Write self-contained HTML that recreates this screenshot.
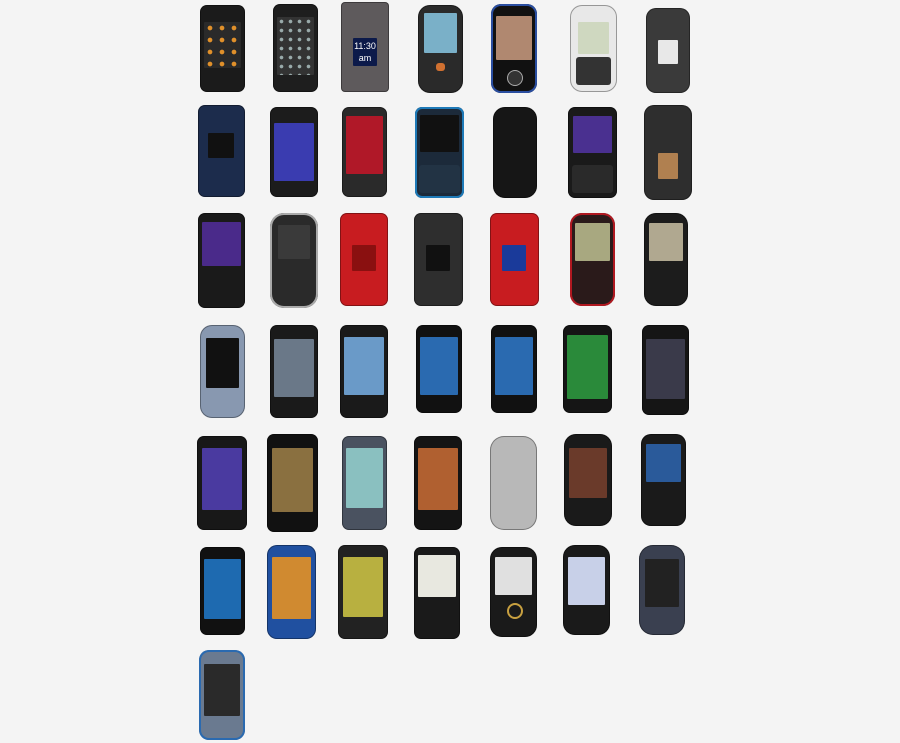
<!DOCTYPE html>
<html><head><style>
body{margin:0;width:900px;height:743px;background:#f4f4f4;position:relative;overflow:hidden;font-family:"Liberation Sans",sans-serif}
.p{position:absolute;border-radius:7px;box-shadow:inset 0 0 0 1px rgba(0,0,0,.35)}
.s{position:absolute;border-radius:1px}
.k{position:absolute;border-radius:3px}
</style></head><body>
<!-- Row 1 -->
<div class="p" style="left:200px;top:5px;width:45px;height:87px;background:#1b1b1b"><div class="s" style="left:4px;top:17px;width:37px;height:46px;background:#2a2a2a;background-image:radial-gradient(#e0902a 25%,transparent 30%);background-size:12px 12px"></div></div>
<div class="p" style="left:273px;top:4px;width:45px;height:88px;background:#1e1e1e"><div class="s" style="left:4px;top:13px;width:37px;height:58px;background:#333;background-image:radial-gradient(#9aa 25%,transparent 32%);background-size:9px 9px"></div></div>
<div class="p" style="left:341px;top:2px;width:48px;height:90px;background:#5e5a5c;border-radius:4px"><div class="s" style="left:12px;top:36px;width:24px;height:26px;background:#0c1a4a;color:#fff;font-size:9px;text-align:center;line-height:12px;padding-top:2px">11:30<br>am</div></div>
<div class="p" style="left:418px;top:5px;width:45px;height:88px;background:#2a2a2a;border-radius:12px"><div class="s" style="left:6px;top:8px;width:33px;height:40px;background:#7ab0c8"></div><div class="k" style="left:18px;top:58px;width:9px;height:8px;background:#d07030"></div></div>
<div class="p" style="left:491px;top:4px;width:46px;height:89px;background:#111;box-shadow:inset 0 0 0 2px #2a4ea0;border-radius:10px"><div class="s" style="left:5px;top:12px;width:36px;height:44px;background:#b08870"></div><div class="k" style="left:16px;top:66px;width:14px;height:14px;border-radius:50%;background:#333;border:1px solid #aaa"></div></div>
<div class="p" style="left:570px;top:5px;width:47px;height:87px;background:#e8e8e8;border-radius:12px"><div class="s" style="left:8px;top:17px;width:31px;height:32px;background:#cfd8c0"></div><div class="k" style="left:6px;top:52px;width:35px;height:28px;background:#333"></div></div>
<div class="p" style="left:646px;top:8px;width:44px;height:85px;background:#3a3a3a;border-radius:10px"><div class="s" style="left:12px;top:32px;width:20px;height:24px;background:#e8e8e8"></div></div>
<!-- Row 2 -->
<div class="p" style="left:198px;top:105px;width:47px;height:92px;background:#1c2c4c"><div class="s" style="left:10px;top:28px;width:26px;height:25px;background:#111"></div></div>
<div class="p" style="left:270px;top:107px;width:48px;height:90px;background:#1c1c1c"><div class="s" style="left:4px;top:16px;width:40px;height:58px;background:#3a3cb0"></div></div>
<div class="p" style="left:342px;top:107px;width:45px;height:90px;background:#2a2a2a"><div class="s" style="left:4px;top:9px;width:37px;height:58px;background:#b01828"></div></div>
<div class="p" style="left:415px;top:107px;width:49px;height:91px;background:#1c2a3a;box-shadow:inset 0 0 0 2px #1e7ab8"><div class="s" style="left:5px;top:8px;width:39px;height:37px;background:#111"></div><div class="k" style="left:4px;top:58px;width:41px;height:28px;background:#234"></div></div>
<div class="p" style="left:493px;top:107px;width:44px;height:91px;background:#161616;border-radius:12px"></div>
<div class="p" style="left:568px;top:107px;width:49px;height:91px;background:#1a1a1a"><div class="s" style="left:5px;top:9px;width:39px;height:37px;background:#4a3090"></div><div class="k" style="left:4px;top:58px;width:41px;height:28px;background:#2a2a2a"></div></div>
<div class="p" style="left:644px;top:105px;width:48px;height:95px;background:#2e2e2e;border-radius:10px"><div class="s" style="left:14px;top:48px;width:20px;height:26px;background:#b08050"></div></div>
<!-- Row 3 -->
<div class="p" style="left:198px;top:213px;width:47px;height:95px;background:#1a1a1a"><div class="s" style="left:4px;top:9px;width:39px;height:44px;background:#4a2a8a"></div></div>
<div class="p" style="left:270px;top:213px;width:48px;height:95px;background:#2a2a2a;box-shadow:inset 0 0 0 2px #aaa;border-radius:14px"><div class="s" style="left:8px;top:12px;width:32px;height:34px;background:#3a3a3a"></div></div>
<div class="p" style="left:340px;top:213px;width:48px;height:93px;background:#c81c20"><div class="s" style="left:12px;top:32px;width:24px;height:26px;background:#8a1010"></div></div>
<div class="p" style="left:414px;top:213px;width:49px;height:93px;background:#2e2e2e"><div class="s" style="left:12px;top:32px;width:24px;height:26px;background:#111"></div></div>
<div class="p" style="left:490px;top:213px;width:49px;height:93px;background:#c81c20"><div class="s" style="left:12px;top:32px;width:24px;height:26px;background:#1a3a9a"></div></div>
<div class="p" style="left:570px;top:213px;width:45px;height:93px;background:#2a1a1a;box-shadow:inset 0 0 0 2px #b01820;border-radius:12px"><div class="s" style="left:5px;top:10px;width:35px;height:38px;background:#a8a880"></div></div>
<div class="p" style="left:644px;top:213px;width:44px;height:93px;background:#1c1c1c;border-radius:12px"><div class="s" style="left:5px;top:10px;width:34px;height:38px;background:#b0a890"></div></div>
<!-- Row 4 -->
<div class="p" style="left:200px;top:325px;width:45px;height:93px;background:#8898b0;border-radius:12px"><div class="s" style="left:6px;top:13px;width:33px;height:50px;background:#111"></div></div>
<div class="p" style="left:270px;top:325px;width:48px;height:93px;background:#1a1a1a"><div class="s" style="left:4px;top:14px;width:40px;height:58px;background:#6a7888"></div></div>
<div class="p" style="left:340px;top:325px;width:48px;height:93px;background:#1a1a1a"><div class="s" style="left:4px;top:12px;width:40px;height:58px;background:#6a9ac8"></div></div>
<div class="p" style="left:416px;top:325px;width:46px;height:88px;background:#111"><div class="s" style="left:4px;top:12px;width:38px;height:58px;background:#2a6ab0"></div></div>
<div class="p" style="left:491px;top:325px;width:46px;height:88px;background:#111"><div class="s" style="left:4px;top:12px;width:38px;height:58px;background:#2a6ab0"></div></div>
<div class="p" style="left:563px;top:325px;width:49px;height:88px;background:#151515"><div class="s" style="left:4px;top:10px;width:41px;height:64px;background:#2a8a3a"></div></div>
<div class="p" style="left:642px;top:325px;width:47px;height:90px;background:#151515"><div class="s" style="left:4px;top:14px;width:39px;height:60px;background:#3a3a4a"></div></div>
<!-- Row 5 -->
<div class="p" style="left:197px;top:436px;width:50px;height:94px;background:#181818"><div class="s" style="left:5px;top:12px;width:40px;height:62px;background:#4a3aa0"></div></div>
<div class="p" style="left:267px;top:434px;width:51px;height:98px;background:#111"><div class="s" style="left:5px;top:14px;width:41px;height:64px;background:#8a7040"></div></div>
<div class="p" style="left:342px;top:436px;width:45px;height:94px;background:#4a5260"><div class="s" style="left:4px;top:12px;width:37px;height:60px;background:#8ac0c0"></div></div>
<div class="p" style="left:414px;top:436px;width:48px;height:94px;background:#141414"><div class="s" style="left:4px;top:12px;width:40px;height:62px;background:#b06030"></div></div>
<div class="p" style="left:490px;top:436px;width:47px;height:94px;background:#b8b8b8;border-radius:14px"></div>
<div class="p" style="left:564px;top:434px;width:48px;height:92px;background:#1a1a1a;border-radius:12px"><div class="s" style="left:5px;top:14px;width:38px;height:50px;background:#6a3a2a"></div></div>
<div class="p" style="left:641px;top:434px;width:45px;height:92px;background:#1a1a1a;border-radius:10px"><div class="s" style="left:5px;top:10px;width:35px;height:38px;background:#2a5a9a"></div></div>
<!-- Row 6 -->
<div class="p" style="left:200px;top:547px;width:45px;height:88px;background:#111"><div class="s" style="left:4px;top:12px;width:37px;height:60px;background:#1e6ab0"></div></div>
<div class="p" style="left:267px;top:545px;width:49px;height:94px;background:#2050a0;border-radius:10px"><div class="s" style="left:5px;top:12px;width:39px;height:62px;background:#d08a30"></div></div>
<div class="p" style="left:338px;top:545px;width:50px;height:94px;background:#222"><div class="s" style="left:5px;top:12px;width:40px;height:60px;background:#b8b040"></div></div>
<div class="p" style="left:414px;top:547px;width:46px;height:92px;background:#1a1a1a"><div class="s" style="left:4px;top:8px;width:38px;height:42px;background:#e8e8e0"></div></div>
<div class="p" style="left:490px;top:547px;width:47px;height:90px;background:#1a1a1a;border-radius:12px"><div class="s" style="left:5px;top:10px;width:37px;height:38px;background:#e0e0e0"></div><div class="k" style="left:17px;top:56px;width:12px;height:12px;border-radius:50%;border:2px solid #c8a040"></div></div>
<div class="p" style="left:563px;top:545px;width:47px;height:90px;background:#1a1a1a;border-radius:12px"><div class="s" style="left:5px;top:12px;width:37px;height:48px;background:#c8d0e8"></div></div>
<div class="p" style="left:639px;top:545px;width:46px;height:90px;background:#3a4050;border-radius:14px"><div class="s" style="left:6px;top:14px;width:34px;height:48px;background:#222"></div></div>
<!-- Row 7 -->
<div class="p" style="left:199px;top:650px;width:46px;height:90px;background:#6a7a90;box-shadow:inset 0 0 0 2px #2a6ab0;border-radius:10px"><div class="s" style="left:5px;top:14px;width:36px;height:52px;background:#2a2a2a"></div></div>
</body></html>
